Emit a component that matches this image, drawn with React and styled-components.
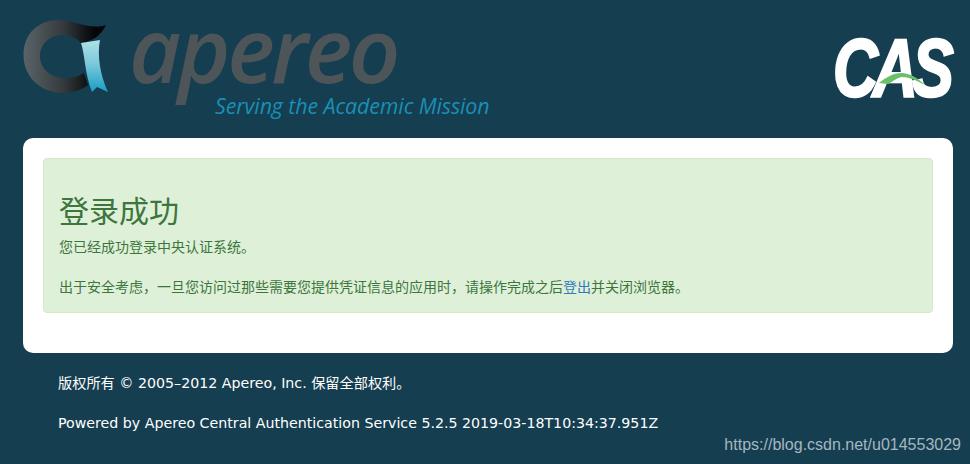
import React from "react";
import styled, { createGlobalStyle } from "styled-components";

const GlobalStyle = createGlobalStyle`
  html, body {
    margin: 0;
    height: 100%;
    background: #153e50;
    overflow: hidden;
  }
`;

const Page = styled.div`
  position: relative;
  width: 970px;
  height: 464px;
  display: flex;
  flex-direction: column;
  font-family: "DejaVu Sans", "Noto Sans CJK SC", sans-serif;
`;

const Header = styled.header`
  height: 138px;
  display: flex;
  justify-content: space-between;
  flex: none;
`;

const LogoSvg = styled.svg`
  display: block;
  flex: none;
`;

const Card = styled.main`
  margin: 0 17px 0 23px;
  padding: 20px;
  height: 215px;
  box-sizing: border-box;
  background: #fff;
  border-radius: 10px;
`;

const Alert = styled.section`
  height: 155px;
  box-sizing: border-box;
  padding: 34px 15px 0;
  background: #dff0d8;
  border: 1px solid #d6e9c6;
  border-radius: 4px;
  color: #3c763d;
  font-family: "Noto Sans CJK SC", sans-serif;
`;

const Title = styled.h2`
  margin: 0;
  font-size: 30px;
  font-weight: 400;
  line-height: 33px;
`;

const Text = styled.p`
  margin: ${(p) => p.$top}px 0 0;
  font-size: 14px;
  line-height: 20px;
`;

const LogoutLink = styled.a`
  color: #337ab7;
  text-decoration: none;
`;

const Footer = styled.footer`
  padding: 10px 0 0 58px;
  color: #fff;
  font-size: 14.2px;
  line-height: 40px;
`;

const FooterLine = styled.div`
  white-space: nowrap;
`;

const Watermark = styled.span`
  position: absolute;
  right: 9px;
  bottom: 9px;
  color: #a5b7c0;
  font-family: "Liberation Sans", sans-serif;
  font-size: 16px;
  line-height: 20px;
`;

function ApereoLogo() {
  return (
    <LogoSvg width="510" height="138" viewBox="0 0 510 138">
      <defs>
        <linearGradient id="ring" x1="0" x2="1" y1="0" y2="0">
          <stop offset="0" stopColor="#5a6468" />
          <stop offset="0.5" stopColor="#33383c" />
          <stop offset="0.85" stopColor="#050709" />
          <stop offset="1" stopColor="#050709" />
        </linearGradient>
        <linearGradient id="ribbon" x1="0" x2="0" y1="0" y2="1">
          <stop offset="0" stopColor="#b0e2e8" />
          <stop offset="0.45" stopColor="#7cc9da" />
          <stop offset="1" stopColor="#189ec6" />
        </linearGradient>
      </defs>
      <path
        d="M106 25 C96 28 86 26 76 23 C50 14 23 26 23.5 56 C24 80 45 94 65 93 C74 92.5 81 90 88 85 L84 73 C78 77 72 78 65 78 C50 78 40 68 40 56 C40 44 50 35 62 35 C70 35 77 38 81 43 C92 41 100 37 106 25 Z"
        fill="url(#ring)"
      />
      <path
        d="M81 43 L100 40 C97 55 100 75 108 92 L97 87 L92 92 C85 75 85 55 81 43 Z"
        fill="url(#ribbon)"
      />
      <text x="129" y="83" fontFamily="Open Sans" fontStyle="italic" fontWeight="600" fontSize="90" letterSpacing="-3.4" fill="#4e5559">
        apereo
      </text>
      <text x="215" y="114" fontFamily="Open Sans" fontStyle="italic" fontSize="21.4" letterSpacing="-0.1" fill="#1a8fb5">
        Serving the Academic Mission
      </text>
    </LogoSvg>
  );
}

function CasLogo() {
  return (
    <LogoSvg width="140" height="138" viewBox="0 0 140 138">
      <text
        transform="translate(3 96) scale(0.76 1)"
        fontFamily="Liberation Sans"
        fontStyle="italic"
        fontWeight="700"
        fontSize="82"
        letterSpacing="-7"
        fill="#fff"
        stroke="#fff"
        strokeWidth="2.5"
      >
        CAS
      </text>
      <path d="M49 83 C55 78 63 73 71 73 C80 73 88 78 95 85 C86 80 78 77 72 77 C66 78 62 82 58 84 Z" fill="#6abf69" />
    </LogoSvg>
  );
}

export default function App() {
  return (
    <Page>
      <GlobalStyle />
      <Header>
        <ApereoLogo />
        <CasLogo />
      </Header>
      <Card>
        <Alert>
          <Title>登录成功</Title>
          <Text $top={10}>您已经成功登录中央认证系统。</Text>
          <Text $top={20}>
            出于安全考虑，一旦您访问过那些需要您提供凭证信息的应用时，请操作完成之后
            <LogoutLink href="#">登出</LogoutLink>
            并关闭浏览器。
          </Text>
        </Alert>
      </Card>
      <Footer>
        <FooterLine>版权所有 © 2005–2012 Apereo, Inc. 保留全部权利。</FooterLine>
        <FooterLine>Powered by Apereo Central Authentication Service 5.2.5 2019-03-18T10:34:37.951Z</FooterLine>
      </Footer>
      <Watermark>https://blog.csdn.net/u014553029</Watermark>
    </Page>
  );
}
